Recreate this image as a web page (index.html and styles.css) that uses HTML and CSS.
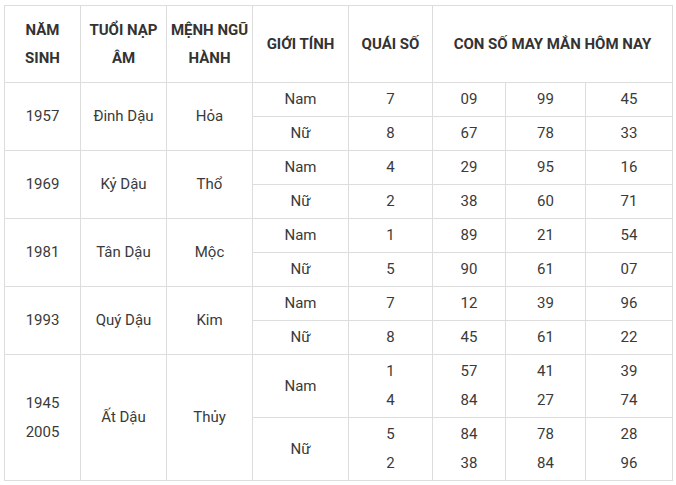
FILE: index.html
```html
<!DOCTYPE html>
<html lang="vi">
<head>
<meta charset="utf-8">
<title>Con số may mắn tuổi Dậu</title>
<link rel="stylesheet" href="styles.css">
</head>
<body>
<table class="lucky">
  <colgroup>
    <col class="c1"><col class="c2"><col class="c3"><col class="c4"><col class="c5"><col class="c6"><col class="c7"><col class="c8">
  </colgroup>
  <thead>
    <tr>
      <th>NĂM<br>SINH</th>
      <th>TUỔI NẠP<br>ÂM</th>
      <th>MỆNH NGŨ<br>HÀNH</th>
      <th>GIỚI TÍNH</th>
      <th>QUÁI SỐ</th>
      <th colspan="3">CON SỐ MAY MẮN HÔM NAY</th>
    </tr>
  </thead>
  <tbody>
    <tr><td rowspan="2">1957</td><td rowspan="2">Đinh Dậu</td><td rowspan="2">Hỏa</td><td>Nam</td><td>7</td><td>09</td><td>99</td><td>45</td></tr>
    <tr><td>Nữ</td><td>8</td><td>67</td><td>78</td><td>33</td></tr>
    <tr><td rowspan="2">1969</td><td rowspan="2">Kỷ Dậu</td><td rowspan="2">Thổ</td><td>Nam</td><td>4</td><td>29</td><td>95</td><td>16</td></tr>
    <tr><td>Nữ</td><td>2</td><td>38</td><td>60</td><td>71</td></tr>
    <tr><td rowspan="2">1981</td><td rowspan="2">Tân Dậu</td><td rowspan="2">Mộc</td><td>Nam</td><td>1</td><td>89</td><td>21</td><td>54</td></tr>
    <tr><td>Nữ</td><td>5</td><td>90</td><td>61</td><td>07</td></tr>
    <tr><td rowspan="2">1993</td><td rowspan="2">Quý Dậu</td><td rowspan="2">Kim</td><td>Nam</td><td>7</td><td>12</td><td>39</td><td>96</td></tr>
    <tr><td>Nữ</td><td>8</td><td>45</td><td>61</td><td>22</td></tr>
    <tr><td rowspan="2">1945<br>2005</td><td rowspan="2">Ất Dậu</td><td rowspan="2">Thủy</td><td>Nam</td><td>1<br>4</td><td>57<br>84</td><td>41<br>27</td><td>39<br>74</td></tr>
    <tr><td>Nữ</td><td>5<br>2</td><td>84<br>38</td><td>78<br>84</td><td>28<br>96</td></tr>
  </tbody>
</table>
</body>
</html>
```

FILE: styles.css
```css
html, body {
  margin: 0;
  padding: 0;
  background: #ffffff;
}

body {
  padding: 5px 0 0 4px;
  font-family: Roboto, "Liberation Sans", Arial, sans-serif;
  color: #333333;
}

.lucky {
  border-collapse: collapse;
  table-layout: fixed;
  width: 668px;
  font-size: 15px;
}

.lucky .c1 { width: 76px; }
.lucky .c2 { width: 86px; }
.lucky .c3 { width: 86px; }
.lucky .c4 { width: 96px; }
.lucky .c5 { width: 84px; }
.lucky .c6 { width: 73px; }
.lucky .c7 { width: 80px; }
.lucky .c8 { width: 87px; }

.lucky th,
.lucky td {
  border: 1px solid #dddddd;
  text-align: center;
  vertical-align: middle;
  padding: 2px 2px;
  line-height: 29px;
  white-space: nowrap;
}

.lucky th {
  font-weight: 700;
  line-height: 28px;
  padding: 10px 2px 10px;
  color: #333333;
}

.lucky td {
  font-weight: 400;
  color: #3a3a3a;
}
```
